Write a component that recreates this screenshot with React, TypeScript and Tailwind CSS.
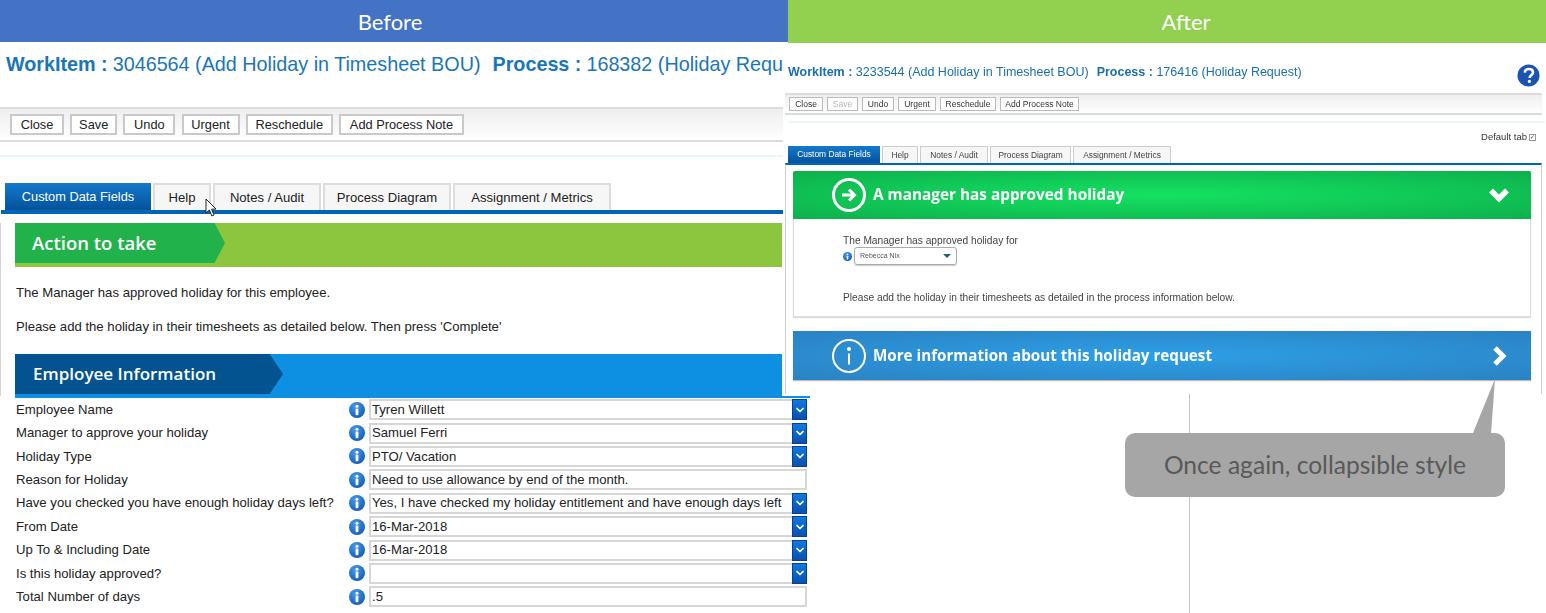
import { ChevronDown } from "lucide-react";

const beforeFields = [
  { label: "Employee Name", value: "Tyren Willett", select: true },
  { label: "Manager to approve your holiday", value: "Samuel Ferri", select: true },
  { label: "Holiday Type", value: "PTO/ Vacation", select: true },
  { label: "Reason for Holiday", value: "Need to use allowance by end of the month.", select: false },
  { label: "Have you checked you have enough holiday days left?", value: "Yes, I have checked my holiday entitlement and have enough days left", select: true },
  { label: "From Date", value: "16-Mar-2018", select: true },
  { label: "Up To & Including Date", value: "16-Mar-2018", select: true },
  { label: "Is this holiday approved?", value: "", select: true },
  { label: "Total Number of days", value: ".5", select: false },
];

const tabNames = ["Help", "Notes / Audit", "Process Diagram", "Assignment / Metrics"];
const bigButtons = [
  { name: "Close", w: "w-[54px]" },
  { name: "Save", w: "w-[47px]" },
  { name: "Undo", w: "w-[52px]" },
  { name: "Urgent", w: "w-[58px]" },
  { name: "Reschedule", w: "w-[87px]" },
  { name: "Add Process Note", w: "w-[125px]" },
];
const smallButtons = [
  { name: "Close", w: "w-[34px]" },
  { name: "Save", w: "w-[31px]" },
  { name: "Undo", w: "w-[32px]" },
  { name: "Urgent", w: "w-[38px]" },
  { name: "Reschedule", w: "w-[56px]" },
  { name: "Add Process Note", w: "w-[79px]" },
];

function InfoDot({ size = 16 }: { size?: number }) {
  return (
    <svg width={size} height={size} viewBox="0 0 16 16" className="shrink-0">
      <defs>
        <radialGradient id="dot" cx="40%" cy="30%" r="80%">
          <stop offset="0%" stopColor="#4a9be8" />
          <stop offset="100%" stopColor="#0b55b5" />
        </radialGradient>
      </defs>
      <circle cx="8" cy="8" r="8" fill="url(#dot)" />
      <circle cx="8" cy="4.2" r="1.5" fill="#fff" />
      <rect x="6.6" y="6.6" width="2.8" height="6.6" rx="0.8" fill="#fff" />
    </svg>
  );
}

function CursorArrow() {
  return (
    <svg width="13" height="20" viewBox="0 0 13 20" className="absolute left-[205px] top-[198px]">
      <path d="M1 1 L1 15 L4.4 12 L6.8 18 L9 17 L6.6 11.2 L11 11 Z" fill="#fff" stroke="#222" strokeWidth="1" />
    </svg>
  );
}

function FieldRow({ label, value, select }: { label: string; value: string; select: boolean }) {
  return (
    <div className="flex h-[23.4px] items-center">
      <div className="w-[334px] whitespace-nowrap pl-[1px] text-[13.15px] text-[#222]">{label}</div>
      <InfoDot />
      <div className="ml-[4px] flex h-[21px] w-[438px] items-center justify-between border-2 border-[#d6d6d6] bg-white pl-[1px] text-[13.15px] text-[#222]">
        <span className="whitespace-nowrap">{value}</span>
        {select && (
          <span className="-mr-[2px] flex h-[21px] w-[15px] shrink-0 items-center justify-center border border-[#0a3f8c] bg-gradient-to-b from-[#0f7ae0] to-[#0a50b0]">
            <ChevronDown size={12} strokeWidth={3.5} className="text-white" />
          </span>
        )}
      </div>
    </div>
  );
}

function BeforePanel() {
  return (
    <div className="w-[788px] shrink-0 font-['Liberation_Sans',Arial,sans-serif]">
      <div className="flex h-[42px] items-center justify-center bg-[#4472c4] pr-[8px] font-['Lato',sans-serif] text-[22px] text-white">
        Before
      </div>
      <div className="flex h-[44px] items-center overflow-hidden whitespace-nowrap pl-[6px] pt-[1px] text-[19.75px] text-[#1a76b8]">
        <b>WorkItem :</b>
        <span className="ml-[5px]">3046564 (Add Holiday in Timesheet BOU)</span>
        <b className="ml-[12px]">Process :</b>
        <span className="ml-[5px]">168382 (Holiday Requ</span>
      </div>
      <div className="mt-[21px] flex h-[35px] w-[783px] items-center gap-[6.2px] border-y-2 border-[#dcdcdc] bg-gradient-to-b from-[#eeeeee] to-white pl-[10px]">
        {bigButtons.map((b) => (
          <div key={b.name} className={`flex h-[21px] items-center justify-center whitespace-nowrap border-2 border-[#c9c9c9] bg-white text-[12.8px] text-[#222] ${b.w}`}>
            {b.name}
          </div>
        ))}
      </div>
      <div className="mt-[13px] h-[2px] w-[783px] bg-[#ebf6fb]" />
      <div className="mt-[26px] w-[783px]">
        <div className="flex h-[27px] items-stretch gap-[2px] pl-[5px] text-[13.1px]">
          <div className="flex w-[146px] items-center justify-center bg-gradient-to-b from-[#1479cc] to-[#04529c] text-[12.8px] text-white">
            Custom Data Fields
          </div>
          {tabNames.map((name, i) => (
            <div
              key={name}
              className={`flex items-center justify-center whitespace-nowrap border-2 border-b-0 border-[#dddddd] bg-[#f6f6f6] text-[#222] ${
                ["w-[58px]", "w-[108px]", "w-[128px]", "w-[158px]"][i]
              }`}
            >
              {name}
            </div>
          ))}
        </div>
        <div className="ml-[1px] h-[4px] bg-[#0066b3]" />
      </div>
      <div className="w-[782px] border-l border-[#d5d5d5]">
        <div className="ml-[14px] mt-[9px] h-[44px] bg-[#8cc63f]">
          <div className="flex h-[40px] w-[210px] items-center bg-[#21b24b] pl-[17px] font-['Open_Sans',sans-serif] text-[18.5px] font-semibold text-white [clip-path:polygon(0_0,95%_0,100%_50%,95%_100%,0_100%)]">
            Action to take
          </div>
        </div>
        <p className="ml-[15px] mt-[15.5px] whitespace-nowrap text-[13.15px] text-[#222]">The Manager has approved holiday for this employee.</p>
        <p className="ml-[15px] mt-[15px] whitespace-nowrap text-[13.15px] text-[#222]">Please add the holiday in their timesheets as detailed below. Then press 'Complete'</p>
        <div className="ml-[14px] mt-[17px] h-[42px] bg-[#0e90e2]">
          <div className="flex h-[40px] w-[268px] items-center bg-[#02538f] pl-[18px] font-['Open_Sans',sans-serif] text-[17px] font-semibold text-white [clip-path:polygon(0_0,95%_0,100%_50%,95%_100%,0_100%)]">
            Employee Information
          </div>
        </div>
      </div>
      <div className="relative z-10 ml-[15px] w-[795px] border-t-2 border-[#0e90e2]">
        {beforeFields.map((f) => (
          <FieldRow key={f.label} {...f} />
        ))}
      </div>
    </div>
  );
}

function AfterPanel() {
  return (
    <div className="flex h-[613px] w-[758px] shrink-0 flex-col font-['Liberation_Sans',Arial,sans-serif]">
      <div className="flex h-[43px] items-center justify-center bg-[#92d050] pl-[38px] font-['Lato',sans-serif] text-[22px] text-white">
        After
      </div>
      <div className="flex flex-1 flex-col blur-[0.35px]">
        <div className="flex h-[50px] items-center justify-between pr-[6px] pt-[8px] text-[12.5px] text-[#1a6fae]">
          <div className="whitespace-nowrap">
            <b className="font-semibold">WorkItem :</b> 3233544 (Add Holiday in Timesheet BOU)
            <b className="ml-[8px] font-semibold">Process :</b> 176416 (Holiday Request)
          </div>
          <svg width="23" height="23" viewBox="0 0 23 23" className="mt-[6px]">
            <circle cx="11.5" cy="11.5" r="11" fill="#1a53b0" />
            <path d="M7.8 8.6 C8 6 10 5 12 5 C14.6 5 16 6.6 16 8.4 C16 11 12.6 11 12.6 14" fill="none" stroke="#fff" strokeWidth="2.6" />
            <circle cx="12.4" cy="17.4" r="1.6" fill="#fff" />
          </svg>
        </div>
        <div className="ml-[-3px] flex h-[22px] w-[757px] items-center gap-[4px] border-y-2 border-[#dcdcdc] bg-gradient-to-b from-[#eeeeee] to-white pl-[4px]">
          {smallButtons.map((b) => (
            <div
              key={b.name}
              className={`flex h-[14px] items-center justify-center whitespace-nowrap border border-[#bbbbbb] bg-white text-[8.5px] ${b.w} ${b.name === "Save" ? "text-[#b5b5b5]" : "text-[#333]"}`}
            >
              {b.name}
            </div>
          ))}
        </div>
        <div className="mt-[6px] h-[2px] w-[757px] bg-[#ebf6fb]" />
        <div className="mr-[10px] mt-[9px] flex h-[10px] items-center justify-end gap-[2px] text-[9.5px] text-[#333]">
          Default tab
          <span className="flex h-[7px] w-[7px] items-center justify-center border border-[#999] text-[6px] leading-none">✓</span>
        </div>
        <div className="mt-[4px] flex h-[17px] items-stretch gap-[2px] text-[8.4px]">
          <div className="flex w-[92px] items-center justify-center bg-gradient-to-b from-[#1479cc] to-[#04529c] text-white">
            Custom Data Fields
          </div>
          {tabNames.map((name, i) => (
            <div
              key={name}
              className={`flex items-center justify-center whitespace-nowrap border border-b-0 border-[#cccccc] bg-[#f6f6f6] text-[#444] ${
                ["w-[36px]", "w-[68px]", "w-[81px]", "w-[98px]"][i]
              }`}
            >
              {name}
            </div>
          ))}
        </div>
        <div className="ml-[-3px] h-[231px] w-[757px] border-x border-t-2 border-x-[#cfcfcf] border-t-[#0066b3] pl-[7px] pr-[10px] pt-[6px]">
          <div className="flex h-[48px] items-center rounded-t-[2px] bg-[radial-gradient(ellipse_at_center,#14e262,#0db04c)] pl-[39px] pr-[21px]">
            <span className="flex h-[34px] w-[34px] items-center justify-center rounded-full border-[3px] border-white">
              <svg width="18" height="18" viewBox="0 0 18 18">
                <path d="M2 9 H14 M9 3.5 L14.5 9 L9 14.5" fill="none" stroke="#fff" strokeWidth="3" />
              </svg>
            </span>
            <span className="ml-[7px] flex-1 font-['Open_Sans',sans-serif] text-[15.35px] font-bold text-white">A manager has approved holiday</span>
            <svg width="22" height="16" viewBox="0 0 22 16">
              <path d="M3 3.5 L11 11.5 L19 3.5" fill="none" stroke="#fff" strokeWidth="5.5" />
            </svg>
          </div>
          <div className="h-[98px] border border-t-0 border-[#dddddd] pl-[49px] pt-[14px] text-[10.2px] text-[#444] shadow-[0_1px_1px_#ddd]">
            <p>The Manager has approved holiday for</p>
            <div className="mt-[-1px] flex items-center gap-[2px]">
              <InfoDot size={9} />
              <div className="flex h-[18px] w-[103px] items-center justify-between rounded-[3px] border border-[#aaaaaa] px-[5px] text-[7px] text-[#555] shadow-[0_1px_1px_#ccc]">
                Rebecca Nix
                <span className="h-0 w-0 border-x-[4px] border-t-[4px] border-x-transparent border-t-[#25597c]" />
              </div>
            </div>
            <p className="mt-[25px]">Please add the holiday in their timesheets as detailed in the process information below.</p>
          </div>
          <div className="mt-[14px] flex h-[49px] items-center bg-[radial-gradient(ellipse_at_center,#2e9fe6,#2a82c2)] pl-[39px] pr-[24px] shadow-[0_1px_1px_#bbb]">
            <span className="flex h-[34px] w-[34px] items-center justify-center rounded-full border-[2px] border-white">
              <svg width="8" height="20" viewBox="0 0 8 20">
                <circle cx="4" cy="3" r="2" fill="#fff" />
                <rect x="3" y="7.5" width="2" height="11" fill="#fff" />
              </svg>
            </span>
            <span className="ml-[7px] flex-1 font-['Open_Sans',sans-serif] text-[15.2px] font-bold text-white">More information about this holiday request</span>
            <svg width="16" height="22" viewBox="0 0 16 22">
              <path d="M4 3 L12 11 L4 19" fill="none" stroke="#fff" strokeWidth="5" />
            </svg>
          </div>
        </div>
        <div className="ml-[401px] flex-1 border-l border-[#c4c4c4]" />
      </div>
    </div>
  );
}

export default function App() {
  return (
    <div className="relative flex h-[613px] w-[1546px] overflow-hidden bg-white">
      <BeforePanel />
      <AfterPanel />
      <CursorArrow />
      {/* callout over the after panel */}
      <svg width="30" height="56" viewBox="0 0 30 56" className="absolute left-[1470px] top-[379px]">
        <path d="M25 0 L21 54 L3 54 Z" fill="#a6a6a6" />
      </svg>
      <div className="absolute left-[1125px] top-[433px] flex h-[64px] w-[380px] items-center justify-center rounded-[10px] bg-[#a6a6a6] font-['Lato',sans-serif] text-[24.6px] text-[#595959]">
        Once again, collapsible style
      </div>
    </div>
  );
}
